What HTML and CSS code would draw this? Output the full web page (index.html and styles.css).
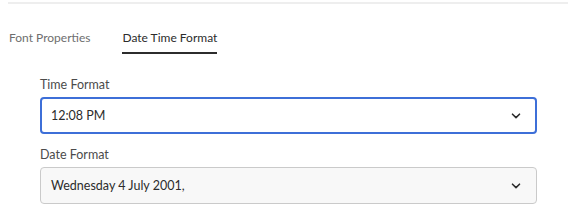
FILE: index.html
```html
<!DOCTYPE html>
<html lang="en">
<head>
    <meta charset="UTF-8">
    <title>Date Time Format</title>
    <link rel="stylesheet" href="styles.css">
</head>
<body>
    <div class="panel">
        <div class="divider"></div>

        <!-- Tabs -->
        <div class="tabs">
            <div class="tab">Font Properties</div>
            <div class="tab active">Date Time Format</div>
        </div>

        <!-- Fields -->
        <div class="fields">
            <div class="field">
                <label>Time Format</label>
                <div class="picker focused">
                    <span>12:08 PM</span>
                    <svg class="chevron" width="10" height="6" viewBox="0 0 10 6"><path d="M1.5 1.2 L5 4.6 L8.5 1.2" fill="none" stroke="#2c2c2c" stroke-width="1.6" stroke-linecap="round" stroke-linejoin="round"/></svg>
                </div>
            </div>
            <div class="field">
                <label>Date Format</label>
                <div class="picker">
                    <span>Wednesday 4 July 2001,</span>
                    <svg class="chevron" width="10" height="6" viewBox="0 0 10 6"><path d="M1.5 1.2 L5 4.6 L8.5 1.2" fill="none" stroke="#2c2c2c" stroke-width="1.6" stroke-linecap="round" stroke-linejoin="round"/></svg>
                </div>
            </div>
        </div>
    </div>
</body>
</html>
```

FILE: styles.css
```css
body {
    margin: 0;
    background: #fff;
    font-family: "Lato", "Noto Sans", sans-serif;
    font-size: 12.5px;
    color: #2c2c2c;
}
.panel {
    width: 577px;
    height: 224px;
    overflow: hidden;
}
.divider {
    margin: 2px 9px 0 8px;
    height: 2px;
    background: #eeeeee;
}
.tabs {
    display: flex;
    gap: 32px;
    margin: 26px 0 0 9px;
    font-size: 12px;
}
.tab {
    color: #6e6e6e;
    padding-bottom: 7px;
    border-bottom: 2px solid transparent;
}
.tab.active {
    color: #2c2c2c;
    border-bottom-color: #2c2c2c;
}
.fields {
    margin: 23px 40px 0 40px;
}
.field {
    margin-bottom: 13px;
}
.field label {
    display: block;
    color: #4b4b4b;
    margin-bottom: 5px;
}
.picker {
    display: flex;
    align-items: center;
    justify-content: space-between;
    height: 37px;
    box-sizing: border-box;
    padding: 0 15px 0 10px;
    border: 1px solid #cacaca;
    border-radius: 4px;
    background: #f8f8f8;
    color: #2c2c2c;
}
.picker.focused {
    background: #fff;
    border: 2px solid #3d6fd8;
    padding-left: 9px;
    padding-right: 14px;
}
```
